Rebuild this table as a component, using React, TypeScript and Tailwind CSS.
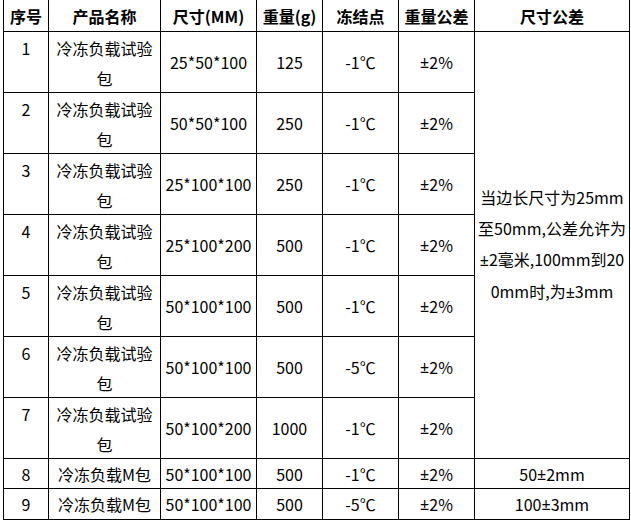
import React from "react";

const PM = () => <span style={{ fontFamily: '"Noto Sans", sans-serif' }}>±</span>;

const rows = [
  { n: "1", size: "25*50*100", w: "125", f: "-1℃" },
  { n: "2", size: "50*50*100", w: "250", f: "-1℃" },
  { n: "3", size: "25*100*100", w: "250", f: "-1℃" },
  { n: "4", size: "25*100*200", w: "500", f: "-1℃" },
  { n: "5", size: "50*100*100", w: "500", f: "-1℃" },
  { n: "6", size: "50*100*100", w: "500", f: "-5℃" },
  { n: "7", size: "50*100*200", w: "1000", f: "-1℃" },
];

const headers = ["序号", "产品名称", "尺寸(MM)", "重量(g)", "冻结点", "重量公差", "尺寸公差"];

export default function App() {
  return (
    <div
      className="w-[631px] h-[523px] bg-white text-black text-[16px] leading-[30px]"
      style={{ fontFamily: '"Noto Sans CJK SC", "Noto Sans", sans-serif' }}
    >
      <div className="ml-[3px] w-[627px] grid grid-cols-[44px_111px_95px_65px_75px_75px_154px] grid-rows-[31px_repeat(7,60px)_29px_30px] gap-px bg-black px-px pb-px">
        {headers.map((h) => (
          <div key={h} className="bg-white flex items-center justify-center font-bold whitespace-nowrap">
            {h}
          </div>
        ))}
        {rows.map((r, i) => (
          <React.Fragment key={r.n}>
            <div className="bg-white text-center pt-px" style={{ gridRow: i + 2, gridColumn: 1 }}>{r.n}</div>
            <div className="bg-white text-center pt-px" style={{ gridRow: i + 2, gridColumn: 2 }}>
              冷冻负载试验
              <br />包
            </div>
            <div className="bg-white flex items-center justify-center" style={{ gridRow: i + 2, gridColumn: 3 }}>{r.size}</div>
            <div className="bg-white flex items-center justify-center" style={{ gridRow: i + 2, gridColumn: 4 }}>{r.w}</div>
            <div className="bg-white flex items-center justify-center" style={{ gridRow: i + 2, gridColumn: 5 }}>{r.f}</div>
            <div className="bg-white flex items-center justify-center" style={{ gridRow: i + 2, gridColumn: 6 }}><PM />2%</div>
          </React.Fragment>
        ))}
        <div className="bg-white row-start-2 row-span-7 col-start-7 flex items-center justify-center text-center leading-[31px]">
          <div>
            当边长尺寸为25mm
            <br />
            至50mm,公差允许为
            <br />
            <PM />2毫米,100mm到20
            <br />
            0mm时,为<PM />3mm
          </div>
        </div>
        {[
          { n: "8", f: "-1℃", a: "50", b: "2mm" },
          { n: "9", f: "-5℃", a: "100", b: "3mm" },
        ].map((r) => (
          <React.Fragment key={r.n}>
            <div className="bg-white flex items-center justify-center">{r.n}</div>
            <div className="bg-white flex items-center justify-center whitespace-nowrap">冷冻负载M包</div>
            <div className="bg-white flex items-center justify-center">50*100*100</div>
            <div className="bg-white flex items-center justify-center">500</div>
            <div className="bg-white flex items-center justify-center">{r.f}</div>
            <div className="bg-white flex items-center justify-center"><PM />2%</div>
            <div className="bg-white flex items-center justify-center">{r.a}<PM />{r.b}</div>
          </React.Fragment>
        ))}
      </div>
    </div>
  );
}
